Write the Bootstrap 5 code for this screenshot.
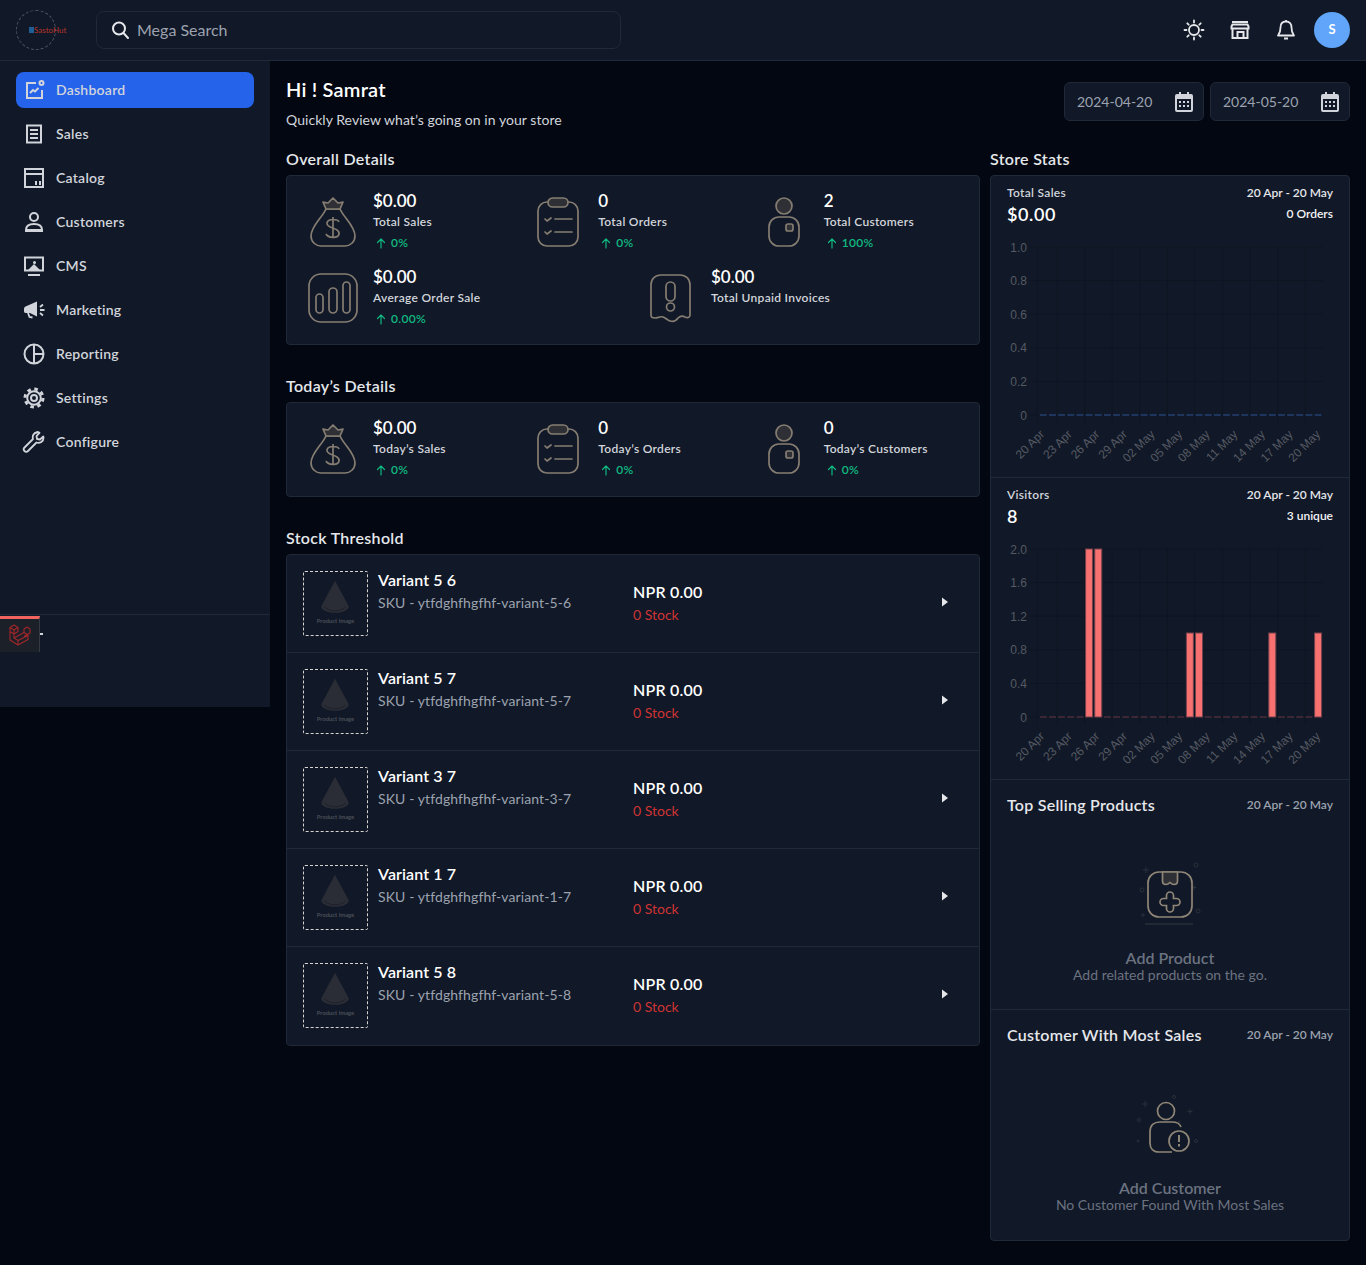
<!DOCTYPE html>
<html lang="en">
<head>
  <meta charset="UTF-8" />
  <meta name="viewport" content="width=device-width, initial-scale=1.0"/>
  <title>Dashboard</title>
  <link href="https://cdn.jsdelivr.net/npm/bootstrap@5.3.0/dist/css/bootstrap.min.css" rel="stylesheet"/>
  <style>
    body {
      background: #030712;
      color: #e5e7eb;
      font-family: "Lato", "Noto Sans", sans-serif;
      font-size: 14px;
      min-height: 1265px;
    }
    .topbar {
      height: 61px;
      background: #111827;
      border-bottom: 1px solid #1f2937;
      padding: 0 16px;
    }
    .brand-ring {
      width: 40px;
      height: 40px;
      border: 1px dashed #4b5563;
      border-radius: 50%;
      padding-left: 12px;
      font-size: 8px;
      color: #b8352c;
      line-height: 1;
      white-space: nowrap;
    }
    .brand-ring i { width: 5px; height: 6px; background: #1e5f96; display: inline-block; flex-shrink: 0; }
    .mega-search {
      width: 525px;
      height: 38px;
      margin-left: 40px;
      background: #111827;
      border: 1px solid #1f2937;
      border-radius: 8px;
      padding-left: 12px;
      color: #9ca3af;
      font-size: 16px;
    }
    .top-ico { width: 24px; height: 24px; color: #e5e7eb; }
    .avatar {
      width: 36px;
      height: 36px;
      background: #60a5fa;
      color: #fff;
      font-size: 13px;
      font-weight: 700;
    }
    .side {
      width: 270px;
      height: 646px;
      background: #111827;
      flex-shrink: 0;
    }
    .side-list { padding: 11px 16px 0; }
    .side-link {
      height: 36px;
      margin-bottom: 8px;
      padding: 0 0 2px 6px;
      border-radius: 8px;
      color: #d1d5db;
      font-weight: 600;
      font-size: 14px;
      letter-spacing: .25px;
      gap: 10px;
      text-decoration: none;
    }
    .side-link.on { background: #2563eb; }
    .side-link svg { width: 24px; height: 24px; flex-shrink: 0; margin-top: 2px; }
    .side-foot { height: 93px; border-top: 1px solid #1f2937; }
    .debug-tab {
      position: absolute;
      top: 1px;
      left: 0;
      width: 40px;
      height: 36px;
      background: #1c2129;
      border-top: 3px solid #f4645f;
      border-right: 1px solid #343a44;
    }
    .debug-dash { position: absolute; top: 18px; left: 40px; width: 3px; height: 2px; background: #d1d5db; }
    .main-area { padding: 16px 16px 24px; width: 1096px; }
    .hello { font-size: 20px; font-weight: 600; letter-spacing: .2px; color: #fff; line-height: 24px; margin: 0; padding-bottom: 9px; }
    .hello-sub { font-size: 14px; color: #d1d5db; line-height: 20px; margin: 0; letter-spacing: .05px; }
    .date-box {
      width: 140px;
      height: 39px;
      background: #111827;
      border: 1px solid #1f2937;
      border-radius: 6px;
      padding: 0 7px 0 12px;
      color: #9ca3af;
      font-size: 14px;
    }
    .date-box svg { width: 24px; height: 24px; color: #d1d5db; }
    .date-pair { padding-top: 5px; gap: 6px; }
    .left-col { width: 694px; }
    .right-col { width: 360px; }
    .sec-title { font-size: 16px; font-weight: 600; letter-spacing: .3px; color: #e5e7eb; line-height: 24px; margin: 0 0 4px; }
    .dark-card {
      background: #111827;
      border: 1px solid #1f2937;
      border-radius: 4px;
      --bs-card-bg: #111827;
      --bs-card-border-color: #1f2937;
      color: #e5e7eb;
    }
    .stat-wrap { padding: 8px 8px; margin-bottom: 29px; }
    .stat-wrap.short { padding-bottom: 9px; }
    .stat-cell { height: 76px; padding-left: 13px; gap: 15px; padding-top: 5px; }
    .w-third { width: 33.333%; }
    .w-half { width: 50%; }
    .stat-ico { width: 50px; height: 50px; margin-top: 8px; flex-shrink: 0; color: #857d72; }
    .stat-val { font-size: 17px; font-weight: 600; color: #fff; line-height: 24px; }
    .stat-lbl { font-size: 12px; font-weight: 600; letter-spacing: .3px; color: #d1d5db; line-height: 18px; }
    .stat-pct { font-size: 12px; font-weight: 600; letter-spacing: .3px; color: #10b981; line-height: 18px; padding-top: 3px; }
    .stat-pct svg { width: 12px; height: 12px; margin: 0 4px 0 2px; vertical-align: -2px; }
    .stock-row {
      height: 98px;
      padding: 16px 16px 0;
      background: transparent;
      border-color: #1f2937;
      color: #e5e7eb;
    }
    .thumb {
      width: 65px;
      height: 65px;
      border: 1px dashed #d6d3d1;
      border-radius: 2px;
      flex-shrink: 0;
    }
    .stock-name { font-size: 16px; font-weight: 600; letter-spacing: .1px; color: #fff; line-height: 20px; margin-bottom: 3px; }
    .stock-sku { font-size: 14px; letter-spacing: .1px; color: #9ca3af; line-height: 20px; }
    .name-col { width: 255px; margin-left: 10px; margin-top: -1px; }
    .price { font-size: 16px; font-weight: 600; letter-spacing: .2px; color: #fff; line-height: 22px; padding-top: 10px; }
    .out { font-size: 14px; color: #cf3434; line-height: 20px; padding-top: 2px; }
    .caret-r { width: 16px; height: 16px; margin-top: 23px; margin-left: auto; margin-right: 10px; color: #e5e7eb; }
    .stat-head { height: 60px; padding: 8px 16px 0; }
    .head-lbl { font-size: 12px; font-weight: 600; letter-spacing: .3px; color: #d1d5db; line-height: 18px; }
    .head-val { font-size: 18px; font-weight: 600; letter-spacing: .6px; color: #fff; line-height: 24px; }
    .head-date { font-size: 12px; font-weight: 600; color: #e5e7eb; line-height: 18px; }
    .head-sub { font-size: 12px; font-weight: 600; color: #f3f4f6; line-height: 18px; padding-top: 3px; }
    .chart-box { display: block; width: 358px; height: 241px; }
    .chart-box text { font-family: "Liberation Sans", sans-serif; font-size: 12px; fill: #555a63; }
    .chart-sec { border-bottom: 1px solid #1f2937; height: 302px; }
    .empty-sec { height: 230px; padding: 13px 16px 0; border-bottom: 1px solid #1f2937; }
    .empty-sec:last-child { border-bottom: 0; }
    .empty-title { font-size: 16px; font-weight: 600; letter-spacing: .25px; color: #e5e7eb; line-height: 24px; }
    .empty-date { font-size: 12px; font-weight: 600; color: #9ca3af; line-height: 24px; }
    .empty-ico { display: block; width: 76px; height: 68px; margin: 0 auto; }
    .empty-main { font-size: 16px; font-weight: 600; color: #6b7280; line-height: 17px; }
    .empty-sub { font-size: 14px; color: #6b7280; line-height: 17px; }
  </style>
</head>
<body>

  <!-- ICONS -->
  <svg width="0" height="0" class="position-absolute">
    <symbol id="i-bag" viewBox="0 0 50 50" fill="none" stroke="currentColor" stroke-width="1.7" stroke-linejoin="round">
      <path d="M18 12C14 21 3 29 3 39c0 6 5 10 10 10h24c5 0 10-4 10-10 0-10-11-18-15-27z"/>
      <path fill="#2e3036" d="M18 12l-3-7 5 1 5-5 5 5 5-1-3 7z"/>
      <path d="M31 25c-1-3-11-4-12 1-1 6 13 4 12 11-1 5-11 4-13 0M25 20v21"/>
    </symbol>
    <symbol id="i-clip" viewBox="0 0 50 50" fill="none" stroke="currentColor" stroke-width="1.7" stroke-linecap="round" stroke-linejoin="round">
      <path d="M15 5h-1C9 5 5 9 5 14v26c0 5 4 9 9 9h22c5 0 9-4 9-9V14c0-5-4-9-9-9h-1"/>
      <rect x="15" y="1" width="20" height="9" rx="4.5" fill="#2e3036"/>
      <path d="M12 22l2 2 4-3M12 35l2 2 4-3M22 22h17M22 35h17"/>
    </symbol>
    <symbol id="i-person" viewBox="0 0 50 50" fill="none" stroke="currentColor" stroke-width="1.7">
      <circle cx="25" cy="9" r="8" fill="#2e3036"/>
      <rect x="10" y="20" width="30" height="29" rx="10"/>
      <rect x="27" y="27" width="7" height="7" rx="2" fill="#2e3036"/>
    </symbol>
    <symbol id="i-bars" viewBox="0 0 50 50" fill="none" stroke="currentColor" stroke-width="1.7">
      <rect x="1" y="1" width="48" height="48" rx="12"/>
      <rect x="8" y="21" width="7" height="19" rx="3.5"/>
      <rect x="21" y="15" width="8" height="25" rx="4"/>
      <rect x="35" y="9" width="7" height="31" rx="3.5"/>
    </symbol>
    <symbol id="i-ghost" viewBox="0 0 50 50" fill="none" stroke="currentColor" stroke-width="1.7">
      <path d="M5 42V12C5 6 9 2 15 2h19c6 0 10 4 10 10v30c0 3-3 3-5 2-3-2-5-1-7 1-2 3-5 4-8 3-3-1-4-3-7-4-3-1-5 1-8 1-3 0-4-1-4-3z"/>
      <rect x="20" y="9" width="9" height="19" rx="4.5"/>
      <circle cx="24.5" cy="34" r="4"/>
    </symbol>
    <symbol id="i-up" viewBox="0 0 12 12" fill="none" stroke="currentColor" stroke-width="1.2" stroke-linecap="round" stroke-linejoin="round">
      <path d="M6 11V2M2.5 5.500L6 2l3.500 3.500"/>
    </symbol>
    <symbol id="i-cal" viewBox="0 0 24 24" fill="currentColor">
      <path d="M7 2h2v2h6V2h2v2h2a2 2 0 0 1 2 2v14a2 2 0 0 1-2 2H5a2 2 0 0 1-2-2V6a2 2 0 0 1 2-2h2z"/>
      <path fill="#111827" d="M5 9h14v11H5z"/>
      <path d="M7 11h2v2H7zM11 11h2v2h-2zM15 11h2v2h-2zM7 15h2v2H7zM11 15h2v2h-2zM15 15h2v2h-2z"/>
    </symbol>
    <symbol id="i-cone" viewBox="0 0 65 65">
      <path fill="#2a2d35" d="M32 9L18 35c-1 4 6 7 14 7s15-3 14-7z"/>
      <path fill="none" stroke="#1a1d25" stroke-width=".8" d="M21 36c3 3 7 4 11 4s8-1 11-4"/>
    </symbol>
  </svg>

  <!-- TOP BAR -->
  <header class="topbar d-flex align-items-center">
    <div class="brand-ring d-flex align-items-center flex-shrink-0"><i></i>SastoHut</div>
    <div class="mega-search d-flex align-items-center gap-1">
      <svg width="24" height="24" viewBox="0 0 24 24" fill="none" stroke="#e5e7eb" stroke-width="2" stroke-linecap="round"><circle cx="10" cy="10.500" r="6"/><path d="M14.500 15l4.500 5"/></svg>
      Mega Search
    </div>
    <div class="ms-auto d-flex align-items-center">
      <svg class="top-ico" viewBox="0 0 24 24" fill="none" stroke="currentColor" stroke-width="1.800" stroke-linecap="round"><circle cx="12" cy="12" r="5"/><path d="M12 2.500v2M12 19.500v2M2.500 12h2M19.500 12h2M5.300 5.300l1.400 1.400M17.300 17.300l1.400 1.400M5.300 18.700l1.400-1.400M17.300 6.700l1.400-1.400"/></svg>
      <svg class="top-ico" style="margin-left:22px" viewBox="0 0 24 24" fill="none" stroke="currentColor" stroke-width="2"><path d="M4 4h16M3.500 8.500l1-2h15l1 2v2h-17zM4.500 10.500V20h15V10.500M9.500 20v-6h6v6"/></svg>
      <svg class="top-ico" style="margin-left:22px" viewBox="0 0 24 24" fill="none" stroke="currentColor" stroke-width="1.800" stroke-linejoin="round"><path d="M12 3.500c-3.500 0-5.500 2.500-5.500 6 0 5-1.500 6.500-2.500 8h16c-1-1.500-2.500-3-2.500-8 0-3.500-2-6-5.500-6zM12 2v1.500M10 20.500h4"/></svg>
      <div class="avatar rounded-circle d-flex align-items-center justify-content-center" style="margin-left:16px">S</div>
    </div>
  </header>

  <div class="d-flex">
    <!-- SIDEBAR -->
    <aside class="side d-flex flex-column">
      <nav class="side-list flex-grow-1">
        <a class="side-link on d-flex align-items-center" href="#">
          <svg viewBox="0 0 24 24" fill="none" stroke="currentColor" stroke-width="2"><path d="M14 5H5v15h15v-8"/><circle cx="19.500" cy="5" r="2"/><path d="M8 15l3-3 2 1.500 3.500-3.500"/></svg>Dashboard</a>
        <a class="side-link d-flex align-items-center" href="#">
          <svg viewBox="0 0 24 24" fill="none" stroke="currentColor" stroke-width="2"><path d="M5 3.500h14v17H5zM8 8h8M8 12h8M8 16h8"/></svg>Sales</a>
        <a class="side-link d-flex align-items-center" href="#">
          <svg viewBox="0 0 24 24" fill="none" stroke="currentColor" stroke-width="2"><path d="M3 3h18v18H3zM3 8h18"/><path fill="currentColor" stroke="none" d="M13 15h2v4h-2zM17 15h2v4h-2z"/></svg>Catalog</a>
        <a class="side-link d-flex align-items-center" href="#">
          <svg viewBox="0 0 24 24" fill="none" stroke="currentColor" stroke-width="2"><circle cx="12" cy="7" r="4"/><path d="M4 20c0-4 3-6 8-6s8 2 8 6zM3 21h18"/></svg>Customers</a>
        <a class="side-link d-flex align-items-center" href="#">
          <svg viewBox="0 0 24 24" fill="none" stroke="currentColor" stroke-width="2"><path d="M3 3.500h18v13H3zM6 21h12"/><path fill="currentColor" stroke="none" d="M6 16l3-3 3-3 3 3 3 3zM11 8.500a1.500 1.500 0 1 0 3 0 1.500 1.500 0 0 0-3 0z"/></svg>CMS</a>
        <a class="side-link d-flex align-items-center" href="#">
          <svg viewBox="0 0 24 24" fill="currentColor"><path d="M15 3.500v15L8 15H3.500C2.500 15 2 14 2 13v-2c0-1 .5-2 1.500-2.500z"/><path fill="none" stroke="currentColor" stroke-width="1.800" d="M6 15l1.500 4 3 .5M18 9l3-2.500M18 12h4.500M18 15l3 2.500"/></svg>Marketing</a>
        <a class="side-link d-flex align-items-center" href="#">
          <svg viewBox="0 0 24 24" fill="none" stroke="currentColor" stroke-width="2"><circle cx="12" cy="12" r="9.500"/><path d="M12 2.500v19M12 12h9.500"/></svg>Reporting</a>
        <a class="side-link d-flex align-items-center" href="#">
          <svg viewBox="0 0 24 24" fill="none" stroke="currentColor"><circle cx="12" cy="12" r="3" stroke-width="2"/><circle cx="12" cy="12" r="6.800" stroke-width="2"/><circle cx="12" cy="12" r="9" stroke-width="3" stroke-dasharray="3.530 3.540"/></svg>Settings</a>
        <a class="side-link d-flex align-items-center" href="#">
          <svg viewBox="0 0 24 24" fill="none" stroke="currentColor" stroke-width="1.800" stroke-linejoin="round"><path d="M15 2.500c-3 0-5 3-4 6.500L2.500 17.500c-1 1-1 2.500 0 3.500s2.500 1 3.500 0L14.500 12.500c3.500 1 7-1 7-4.500 0-.5 0-1-.2-1.500L18 9.500l-3-.5-.5-3 3-3.200c-.8-.5-1.700-.8-2.500-.8z"/></svg>Configure</a>
      </nav>
      <div class="side-foot position-relative">
        <div class="debug-tab d-flex align-items-center justify-content-center">
          <svg width="24" height="24" viewBox="0 0 24 24" fill="none" stroke="#a3262a" stroke-width="1.100" stroke-linejoin="round"><path d="M2 3.500L6 1l4 2.500v4l-4 2.500-4-2.500zM2 3.500l4 2.500 4-2.500M6 6v4M2 3.500V16l8 5 10-5.500v-4l-10 5-4-2.500V10M10 21v-4.500M6 14l10-5.500 4 2.500M16 8.500V5l3-2 3 2v4l-6 3.500"/></svg>
        </div>
        <div class="debug-dash"></div>
      </div>
    </aside>

    <!-- MAIN -->
    <main class="main-area">
      <div class="d-flex justify-content-between" style="height:70px">
        <div>
          <h1 class="hello">Hi ! Samrat</h1>
          <p class="hello-sub">Quickly Review what’s going on in your store</p>
        </div>
        <div class="date-pair d-flex">
          <div class="date-box d-flex align-items-center justify-content-between">2024-04-20<svg><use href="#i-cal"/></svg></div>
          <div class="date-box d-flex align-items-center justify-content-between">2024-05-20<svg><use href="#i-cal"/></svg></div>
        </div>
      </div>

      <div class="d-flex justify-content-between">
        <div class="left-col">
          <h2 class="sec-title">Overall Details</h2>
          <div class="card dark-card stat-wrap d-flex flex-row flex-wrap">
            <div class="stat-cell w-third d-flex"><svg class="stat-ico"><use href="#i-bag"/></svg>
              <div><div class="stat-val">$0.00</div><div class="stat-lbl">Total Sales</div><div class="stat-pct"><svg><use href="#i-up"/></svg>0%</div></div></div>
            <div class="stat-cell w-third d-flex"><svg class="stat-ico"><use href="#i-clip"/></svg>
              <div><div class="stat-val">0</div><div class="stat-lbl">Total Orders</div><div class="stat-pct"><svg><use href="#i-up"/></svg>0%</div></div></div>
            <div class="stat-cell w-third d-flex"><svg class="stat-ico"><use href="#i-person"/></svg>
              <div><div class="stat-val">2</div><div class="stat-lbl">Total Customers</div><div class="stat-pct"><svg><use href="#i-up"/></svg>100%</div></div></div>
            <div class="stat-cell w-half d-flex"><svg class="stat-ico"><use href="#i-bars"/></svg>
              <div><div class="stat-val">$0.00</div><div class="stat-lbl">Average Order Sale</div><div class="stat-pct"><svg><use href="#i-up"/></svg>0.00%</div></div></div>
            <div class="stat-cell w-half d-flex"><svg class="stat-ico"><use href="#i-ghost"/></svg>
              <div><div class="stat-val">$0.00</div><div class="stat-lbl">Total Unpaid Invoices</div></div></div>
          </div>

          <h2 class="sec-title">Today’s Details</h2>
          <div class="card dark-card stat-wrap short d-flex flex-row flex-wrap">
            <div class="stat-cell w-third d-flex"><svg class="stat-ico"><use href="#i-bag"/></svg>
              <div><div class="stat-val">$0.00</div><div class="stat-lbl">Today’s Sales</div><div class="stat-pct"><svg><use href="#i-up"/></svg>0%</div></div></div>
            <div class="stat-cell w-third d-flex"><svg class="stat-ico"><use href="#i-clip"/></svg>
              <div><div class="stat-val">0</div><div class="stat-lbl">Today’s Orders</div><div class="stat-pct"><svg><use href="#i-up"/></svg>0%</div></div></div>
            <div class="stat-cell w-third d-flex"><svg class="stat-ico"><use href="#i-person"/></svg>
              <div><div class="stat-val">0</div><div class="stat-lbl">Today’s Customers</div><div class="stat-pct"><svg><use href="#i-up"/></svg>0%</div></div></div>
          </div>

          <h2 class="sec-title">Stock Threshold</h2>
          <div class="card dark-card overflow-hidden">
            <div class="list-group list-group-flush" id="stock-list"></div>
          </div>
        </div>

        <div class="right-col">
          <h2 class="sec-title">Store Stats</h2>
          <div class="card dark-card">
            <section class="chart-sec">
              <div class="stat-head d-flex justify-content-between">
                <div><div class="head-lbl">Total Sales</div><div class="head-val">$0.00</div></div>
                <div class="text-end"><div class="head-date">20 Apr - 20 May</div><div class="head-sub">0 Orders</div></div>
              </div>
              <svg class="chart-box" id="chart-sales" viewBox="0 0 358 241"></svg>
            </section>
            <section class="chart-sec">
              <div class="stat-head d-flex justify-content-between">
                <div><div class="head-lbl">Visitors</div><div class="head-val">8</div></div>
                <div class="text-end"><div class="head-date">20 Apr - 20 May</div><div class="head-sub">3 unique</div></div>
              </div>
              <svg class="chart-box" id="chart-visitors" viewBox="0 0 358 241"></svg>
            </section>
            <section class="empty-sec">
              <div class="d-flex justify-content-between"><div class="empty-title">Top Selling Products</div><div class="empty-date">20 Apr - 20 May</div></div>
              <div class="text-center" style="padding-top:44px">
                <svg class="empty-ico" viewBox="0 0 76 68" fill="none">
                  <g stroke="#2a2f3a" stroke-width="1"><path d="M14 6v6M11 9h6M62 24v5M59.500 26.500h5M11 52v4M9 54h4"/><circle cx="64" cy="4" r="2"/><circle cx="10" cy="29" r="2"/><circle cx="66" cy="50" r="2"/><path d="M13 63h48" stroke-width="1.500"/></g>
                  <g stroke="#8f8678" stroke-width="1.700"><rect x="16" y="11" width="44" height="45" rx="11"/><path fill="#2e3036" d="M30.500 11v9c0 3 2 3.500 3.500 3.500s3-1 4-2c1 1 2.500 2 4 2s3.500-.5 3.500-3.500v-9z"/><path d="M34.500 37.500v-3a3.500 3.500 0 0 1 7 0v3h3a3.500 3.500 0 0 1 0 7h-3v3a3.500 3.500 0 0 1-7 0v-3h-3a3.500 3.500 0 0 1 0-7z"/></g>
                </svg>
                <div class="empty-main" style="padding-top:20px">Add Product</div>
                <div class="empty-sub">Add related products on the go.</div>
              </div>
            </section>
            <section class="empty-sec">
              <div class="d-flex justify-content-between"><div class="empty-title">Customer With Most Sales</div><div class="empty-date">20 Apr - 20 May</div></div>
              <div class="text-center" style="padding-top:47px">
                <svg class="empty-ico" viewBox="0 0 76 68" fill="none">
                  <g stroke="#2a2f3a" stroke-width="1"><path d="M13 7v6M10 10h6M58 15v5M55.500 17.500h5"/><circle cx="42" cy="3" r="1.500"/><circle cx="7" cy="26" r="1.500"/><circle cx="47" cy="28" r="1"/><circle cx="6" cy="47" r="1"/><circle cx="64" cy="47" r="1.500"/></g>
                  <g stroke="#8f8678" stroke-width="1.700"><circle cx="34" cy="17" r="8.500"/><path d="M40 58H27c-6 0-9-4-9-9V38c0-7 4-10 10-10h12c5 0 8 2 9 5"/><circle cx="47" cy="47" r="10" fill="#111827"/></g>
                  <path stroke="#8f8678" stroke-width="2" d="M47 41v7M47 50v2.500"/>
                </svg>
                <div class="empty-main" style="padding-top:17px">Add Customer</div>
                <div class="empty-sub">No Customer Found With Most Sales</div>
              </div>
            </section>
          </div>
        </div>
      </div>
    </main>
  </div>

  <script src="https://cdn.jsdelivr.net/npm/bootstrap@5.3.0/dist/js/bootstrap.bundle.min.js"></script>
  <script>
    const estoque = [
      ["Variant 5 6", "ytfdghfhgfhf-variant-5-6"],
      ["Variant 5 7", "ytfdghfhgfhf-variant-5-7"],
      ["Variant 3 7", "ytfdghfhgfhf-variant-3-7"],
      ["Variant 1 7", "ytfdghfhgfhf-variant-1-7"],
      ["Variant 5 8", "ytfdghfhgfhf-variant-5-8"]
    ];

    document.getElementById("stock-list").innerHTML = estoque.map(([nome, sku]) => `
      <div class="list-group-item stock-row d-flex">
        <svg class="thumb" viewBox="0 0 65 65"><use href="#i-cone"/><text x="32.500" y="53" text-anchor="middle" font-size="6" font-weight="700" fill="#4b4f57">Product Image</text></svg>
        <div class="name-col"><div class="stock-name">${nome}</div><div class="stock-sku">SKU - ${sku}</div></div>
        <div><div class="price">NPR 0.00</div><div class="out">0 Stock</div></div>
        <svg class="caret-r" viewBox="0 0 16 16" fill="currentColor"><path d="M5 3.500l6 4.500-6 4.500z"/></svg>
      </div>`).join("");

    const rotulos = ["20 Apr","23 Apr","26 Apr","29 Apr","02 May","05 May","08 May","11 May","14 May","17 May","20 May"];

    function desenhaGrafico(id, eixoY, barras, corTraco) {
      const topo = 11, base = 179, x0 = 48, passo = 9.16;
      let s = "";
      eixoY.forEach((v, i) => {
        const y = base - i * (base - topo) / (eixoY.length - 1);
        s += `<path d="M39 ${y}H332" stroke="#0f1522"/>`;
        s += `<text x="36" y="${y + 4.5}" text-anchor="end">${v}</text>`;
      });
      const vx = [46];
      for (let k = 0; k < 10; k++) vx.push(66 + k * 27.6);
      vx.forEach(x => { s += `<path d="M${x} ${topo}V187" stroke="#0f1522"/>`; });
      for (let i = 0; i < 31; i++) {
        const x = x0 + i * passo + 0.8;
        if (barras[i]) {
          const y = base - barras[i] * (base - topo) / 2;
          s += `<rect x="${x}" y="${y}" width="7" height="${base - y}" fill="#f87171" stroke="#74424c"/>`;
        } else {
          s += `<path d="M${x} ${base}h7" stroke="${corTraco}"/>`;
        }
      }
      rotulos.forEach((t, i) => {
        const x = 54 + i * 27.6;
        s += `<text x="${x}" y="199" text-anchor="end" transform="rotate(-45 ${x} 199)">${t}</text>`;
      });
      document.getElementById(id).innerHTML = s;
    }

    desenhaGrafico("chart-sales", ["0", "0.2", "0.4", "0.6", "0.8", "1.0"], {}, "#2f5597");
    desenhaGrafico("chart-visitors", ["0", "0.4", "0.8", "1.2", "1.6", "2.0"], {5: 2, 6: 2, 16: 1, 17: 1, 25: 1, 30: 1}, "#6b3a45");
  </script>
</body>
</html>
